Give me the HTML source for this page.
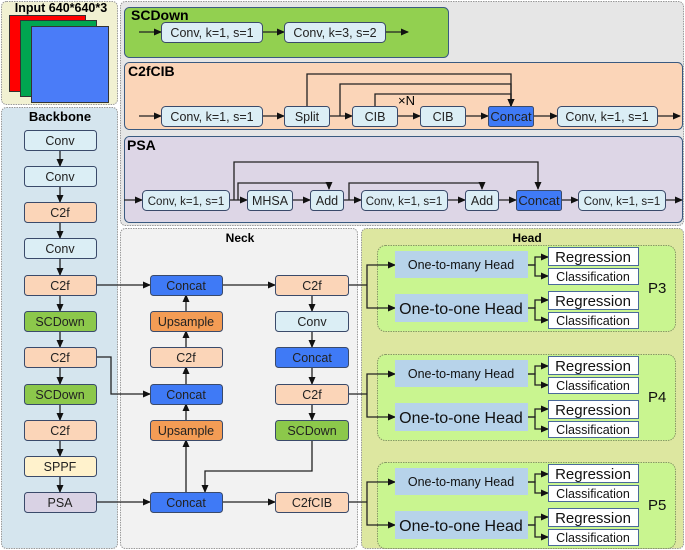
<!DOCTYPE html>
<html><head><meta charset="utf-8"><style>
html,body{margin:0;padding:0;background:#fff;}
svg{display:block;font-family:"Liberation Sans",sans-serif;}
</style></head><body>
<svg width="685" height="550" viewBox="0 0 685 550" xmlns="http://www.w3.org/2000/svg">
<defs>
<marker id="a" markerWidth="8" markerHeight="8" refX="7" refY="4" orient="auto" markerUnits="userSpaceOnUse"><path d="M0,0.5 L8,4 L0,7.5 z" fill="#111"/></marker>
</defs>
<g stroke="#999" stroke-dasharray="1.5,1" stroke-width="1">
<rect x="1.5" y="1.5" width="116" height="103" rx="5" fill="#f1f1d2"/>
<rect x="1.5" y="107.5" width="116" height="441" rx="5" fill="#d5e5ee"/>
<rect x="120.5" y="1.5" width="563" height="224" rx="5" fill="#e6e6e6"/>
<rect x="120.5" y="228.5" width="237" height="320" rx="5" fill="#f2f2f2"/>
<rect x="361.5" y="228.5" width="322" height="320" rx="5" fill="#dde7a0"/>
</g>
<rect x="9.5" y="15.5" width="76" height="76" fill="#f00" stroke="#333"/>
<rect x="20.5" y="20.5" width="76" height="76" fill="#00a550" stroke="#333"/>
<rect x="31.5" y="26.5" width="77" height="76" fill="#4a7cf8" stroke="#333"/>
<text x="61" y="12" font-size="12.5" font-weight="bold" text-anchor="middle">Input 640*640*3</text>
<text x="60" y="121" font-size="13" font-weight="bold" text-anchor="middle">Backbone</text>
<text x="240" y="242" font-size="12" font-weight="bold" text-anchor="middle">Neck</text>
<text x="527" y="242" font-size="12" font-weight="bold" text-anchor="middle">Head</text>

<rect x="124.5" y="7.5" width="324" height="50" rx="5" fill="#92d050" stroke="#3a5a80"/>
<text x="131" y="20" font-size="14" font-weight="bold">SCDown</text>
<rect x="124.5" y="62.5" width="558" height="67" rx="5" fill="#fbd5b8" stroke="#3a5a80"/>
<text x="128" y="76" font-size="14" font-weight="bold">C2fCIB</text>
<rect x="124.5" y="136.5" width="558" height="86" rx="5" fill="#ddd6e6" stroke="#3a5a80"/>
<text x="127" y="150" font-size="14" font-weight="bold">PSA</text>

<g stroke="#222" stroke-width="1.3" fill="none" marker-end="url(#a)">
<path d="M139 32 H161"/><path d="M262 32 H284"/><path d="M385 32 H408"/>
<path d="M139 116 H161"/><path d="M262 116 H284"/><path d="M329 116 H352"/><path d="M397 116 H420"/><path d="M465 116 H488"/><path d="M533 116 H557"/><path d="M657 116 H680"/>
<path d="M307 106 V74 H511 V106"/>
<path d="M340 116 V84 H511 V106"/>
<path d="M375 106 V94 H511 V106"/>
<path d="M124 200 H142"/><path d="M229 200 H247"/><path d="M292 200 H310"/><path d="M343 200 H361"/><path d="M447 200 H465"/><path d="M498 200 H516"/><path d="M561 200 H578"/><path d="M665 200 H682"/>
<path d="M234 200 V162 H538 V189"/>
<path d="M238 200 V183 H329 V189"/>
<path d="M349 200 V183 H482 V189"/>
<path d="M60 149 V166"/><path d="M60 186 V202"/><path d="M60 222 V238"/><path d="M60 259 V275"/><path d="M60 295 V311"/><path d="M60 331 V347"/><path d="M60 367 V384"/><path d="M60 404 V420"/><path d="M60 440 V456"/><path d="M60 476 V492"/>
<path d="M96 285 H150"/>
<path d="M96 357 H111 V394 H150"/>
<path d="M96 502 H150"/>
<path d="M186 492 V440"/><path d="M186 420 V404"/><path d="M186 384 V367"/><path d="M186 347 V331"/><path d="M186 311 V295"/>
<path d="M222 285 H275"/>
<path d="M312 295 V311"/><path d="M312 331 V347"/><path d="M312 367 V384"/><path d="M312 404 V420"/>
<path d="M312 440 V471 H205 V492"/>
<path d="M222 502 H275"/>
</g>
<g stroke="#222" stroke-width="1.3" fill="none">
<path d="M348 285 H367"/><path d="M348 394 H367"/><path d="M348 502 H367"/>
</g>
<text x="398" y="105" font-size="13">×N</text>

<g font-size="12" text-anchor="middle" stroke="#3a4a6a" stroke-width="1">
<rect x="161.5" y="22.5" width="101" height="20" rx="4" fill="#dbeef5"/>
<rect x="284.5" y="22.5" width="101" height="20" rx="4" fill="#dbeef5"/>
<rect x="161.5" y="106.5" width="101" height="20" rx="4" fill="#dbeef5"/>
<rect x="284.5" y="106.5" width="45" height="20" rx="3" fill="#dbeef5"/>
<rect x="352.5" y="106.5" width="45" height="20" rx="3" fill="#dbeef5"/>
<rect x="420.5" y="106.5" width="45" height="20" rx="3" fill="#dbeef5"/>
<rect x="488.5" y="106.5" width="45" height="20" rx="2" fill="#3f7af6"/>
<rect x="557.5" y="106.5" width="100" height="20" rx="4" fill="#dbeef5"/>
<rect x="142.5" y="190.5" width="87" height="20" rx="4" fill="#dbeef5"/>
<rect x="247.5" y="190.5" width="45" height="20" rx="3" fill="#dbeef5"/>
<rect x="310.5" y="190.5" width="33" height="20" rx="3" fill="#dbeef5"/>
<rect x="361.5" y="190.5" width="86" height="20" rx="4" fill="#dbeef5"/>
<rect x="465.5" y="190.5" width="33" height="20" rx="3" fill="#dbeef5"/>
<rect x="516.5" y="190.5" width="45" height="20" rx="2" fill="#3f7af6"/>
<rect x="578.5" y="190.5" width="87" height="20" rx="4" fill="#dbeef5"/>
<rect x="24.5" y="130.5" width="72" height="20" rx="3" fill="#dbeef5"/>
<rect x="24.5" y="166.5" width="72" height="20" rx="3" fill="#dbeef5"/>
<rect x="24.5" y="202.5" width="72" height="20" rx="3" fill="#fbd5b8"/>
<rect x="24.5" y="238.5" width="72" height="20" rx="3" fill="#dbeef5"/>
<rect x="24.5" y="275.5" width="72" height="20" rx="3" fill="#fbd5b8"/>
<rect x="24.5" y="311.5" width="72" height="20" rx="3" fill="#8cc84b"/>
<rect x="24.5" y="347.5" width="72" height="20" rx="3" fill="#fbd5b8"/>
<rect x="24.5" y="384.5" width="72" height="20" rx="3" fill="#8cc84b"/>
<rect x="24.5" y="420.5" width="72" height="20" rx="3" fill="#fbd5b8"/>
<rect x="24.5" y="456.5" width="72" height="20" rx="3" fill="#fff2cc"/>
<rect x="24.5" y="492.5" width="72" height="20" rx="3" fill="#d9d2e4"/>
<rect x="150.5" y="275.5" width="72" height="20" rx="3" fill="#3f7af6"/>
<rect x="150.5" y="311.5" width="72" height="20" rx="3" fill="#f39c55"/>
<rect x="150.5" y="347.5" width="72" height="20" rx="3" fill="#fbd5b8"/>
<rect x="150.5" y="384.5" width="72" height="20" rx="3" fill="#3f7af6"/>
<rect x="150.5" y="420.5" width="72" height="20" rx="3" fill="#f39c55"/>
<rect x="150.5" y="492.5" width="72" height="20" rx="3" fill="#3f7af6"/>
<rect x="275.5" y="275.5" width="73" height="20" rx="3" fill="#fbd5b8"/>
<rect x="275.5" y="311.5" width="73" height="20" rx="3" fill="#dbeef5"/>
<rect x="275.5" y="347.5" width="73" height="20" rx="3" fill="#3f7af6"/>
<rect x="275.5" y="384.5" width="73" height="20" rx="3" fill="#fbd5b8"/>
<rect x="275.5" y="420.5" width="73" height="20" rx="3" fill="#8cc84b"/>
<rect x="275.5" y="492.5" width="73" height="20" rx="3" fill="#fbd5b8"/>
</g>
<g font-size="12.5" text-anchor="middle" fill="#222">
<text x="212" y="37">Conv, k=1, s=1</text>
<text x="335" y="37">Conv, k=3, s=2</text>
<text x="212" y="121">Conv, k=1, s=1</text>
<text x="307" y="121">Split</text>
<text x="375" y="121">CIB</text>
<text x="443" y="121">CIB</text>
<text x="511" y="121" font-size="13">Concat</text>
<text x="607" y="121">Conv, k=1, s=1</text>
<text x="186" y="205" font-size="11.5">Conv, k=1, s=1</text>
<text x="270" y="205">MHSA</text>
<text x="327" y="205">Add</text>
<text x="404" y="205" font-size="11.5">Conv, k=1, s=1</text>
<text x="482" y="205">Add</text>
<text x="539" y="205" font-size="13">Concat</text>
<text x="622" y="205" font-size="11.5">Conv, k=1, s=1</text>
<text x="60" y="145">Conv</text>
<text x="60" y="181">Conv</text>
<text x="60" y="217">C2f</text>
<text x="60" y="253">Conv</text>
<text x="60" y="290">C2f</text>
<text x="60" y="326">SCDown</text>
<text x="60" y="362">C2f</text>
<text x="60" y="399">SCDown</text>
<text x="60" y="435">C2f</text>
<text x="60" y="471">SPPF</text>
<text x="60" y="507">PSA</text>
<text x="186" y="290">Concat</text>
<text x="186" y="326">Upsample</text>
<text x="186" y="362">C2f</text>
<text x="186" y="399">Concat</text>
<text x="186" y="435">Upsample</text>
<text x="186" y="507">Concat</text>
<text x="312" y="290">C2f</text>
<text x="312" y="326">Conv</text>
<text x="312" y="362">Concat</text>
<text x="312" y="399">C2f</text>
<text x="312" y="435">SCDown</text>
<text x="312" y="507">C2fCIB</text>
</g>

<g id="h">
<rect x="377.5" y="245.5" width="298" height="86" rx="8" fill="#c9f590" stroke="#889966" stroke-dasharray="1.5,1"/>
<g stroke="#222" stroke-width="1.3" fill="none" marker-end="url(#a)">
<path d="M367 285 V265 H395"/><path d="M367 285 V308 H395"/>
<path d="M528 265 H535 V257 H548"/><path d="M528 265 H535 V276 H548"/>
<path d="M528 308 H535 V300 H548"/><path d="M528 308 H535 V320 H548"/>
</g>
<rect x="395" y="251" width="133" height="27" fill="#b7d3ea"/>
<rect x="395" y="294" width="133" height="28" fill="#b7d3ea"/>
<g fill="#fff" stroke="#4a6a9a">
<rect x="548.5" y="247.5" width="90" height="18"/>
<rect x="548.5" y="268.5" width="90" height="16"/>
<rect x="548.5" y="291.5" width="90" height="18"/>
<rect x="548.5" y="312.5" width="90" height="16"/>
</g>
<g text-anchor="middle" fill="#111">
<text x="461" y="269" font-size="12.5">One-to-many Head</text>
<text x="461" y="314" font-size="16">One-to-one Head</text>
<text x="593" y="262" font-size="15">Regression</text>
<text x="593" y="281" font-size="12.5">Classification</text>
<text x="593" y="306" font-size="15">Regression</text>
<text x="593" y="325" font-size="12.5">Classification</text>
</g>
</g>
<use href="#h" transform="translate(0,109)"/>
<use href="#h" transform="translate(0,217)"/>
<g font-size="15" fill="#111">
<text x="648" y="293">P3</text><text x="648" y="402">P4</text><text x="648" y="510">P5</text>
</g>
</svg>
</body></html>
